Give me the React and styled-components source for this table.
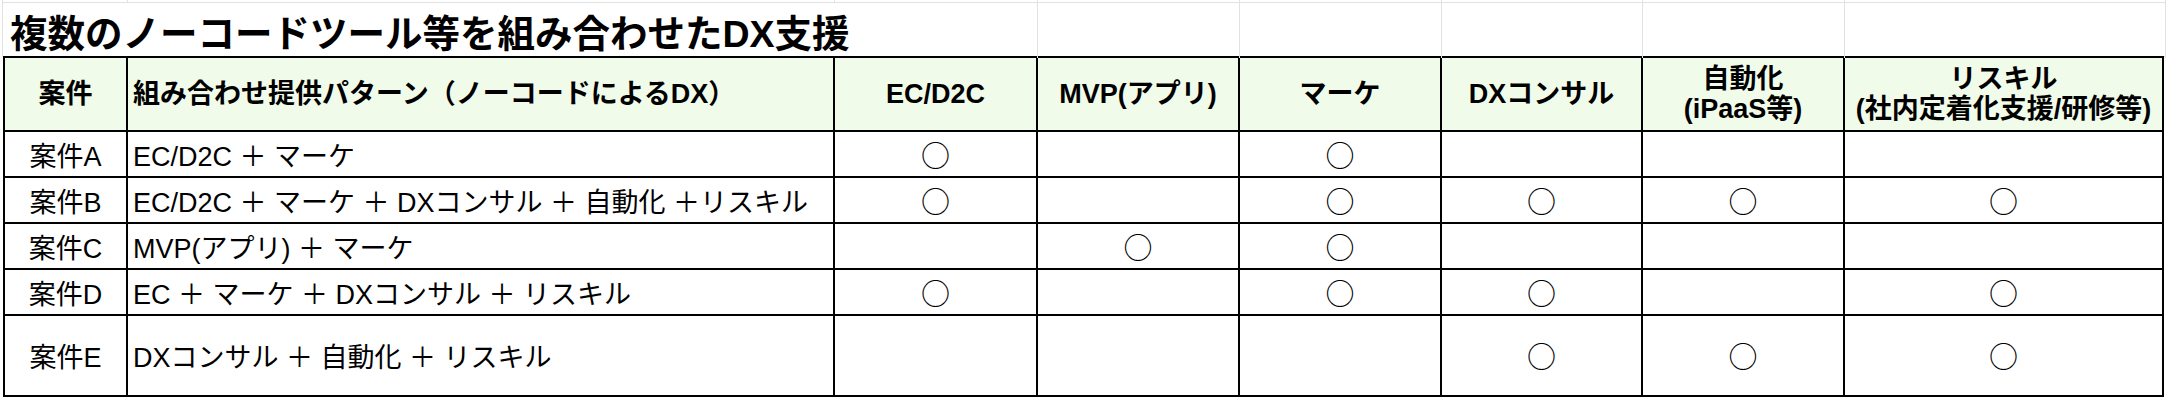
import React from 'react';
import styled, { createGlobalStyle } from 'styled-components';

const GlobalStyle = createGlobalStyle`
  body {
    margin: 0;
    background: #fff;
    color: #000;
    font-family: "Liberation Sans", "Noto Sans CJK JP", sans-serif;
  }
`;

const SHEET_COLS = '125px 707px 203px 202px 202px 201px 202px 321px';
const TABLE_COLS = '121px 705px 201px 200px 200px 199px 200px 317px';

const columns = ['EC/D2C', 'MVP(アプリ)', 'マーケ', 'DXコンサル', ['自動化', '(iPaaS等)'], ['リスキル', '(社内定着化支援/研修等)']];

const rows = [
    { name: '案件A', pattern: 'EC/D2C ＋ マーケ', marks: [1, 0, 1, 0, 0, 0] },
    { name: '案件B', pattern: 'EC/D2C ＋ マーケ ＋ DXコンサル ＋ 自動化 ＋リスキル', marks: [1, 0, 1, 1, 1, 1] },
    { name: '案件C', pattern: 'MVP(アプリ) ＋ マーケ', marks: [0, 1, 1, 0, 0, 0] },
    { name: '案件D', pattern: 'EC ＋ マーケ ＋ DXコンサル ＋ リスキル', marks: [1, 0, 1, 1, 0, 1] },
    { name: '案件E', pattern: 'DXコンサル ＋ 自動化 ＋ リスキル', marks: [0, 0, 0, 1, 1, 1] },
];

export default function App() {
    return (
        <>
            <GlobalStyle />
            <Sheet>
                <GridRow $height={2}>
                    {Array.from({ length: 8 }).map((_, i) => <GridCell key={i} />)}
                </GridRow>
                <GridRow $height={53}>
                    <TitleCell>複数のノーコードツール等を組み合わせたDX支援</TitleCell>
                    {Array.from({ length: 5 }).map((_, i) => <GridCell key={i} />)}
                </GridRow>
                <Table>
                    <HeadCell $align="center">案件</HeadCell>
                    <HeadCell>組み合わせ提供パターン（ノーコードによるDX）</HeadCell>
                    {columns.map((c, i) => (
                        <HeadCell key={i} $align="center">
                            {Array.isArray(c) ? c.map((line) => <Line key={line}>{line}</Line>) : c}
                        </HeadCell>
                    ))}
                    {rows.map((r) => (
                        <React.Fragment key={r.name}>
                            <Cell $align="center">{r.name}</Cell>
                            <Cell>{r.pattern}</Cell>
                            {r.marks.map((m, i) => (
                                <Cell key={i} $align="center">{m ? <Mark>○</Mark> : null}</Cell>
                            ))}
                        </React.Fragment>
                    ))}
                </Table>
            </Sheet>
        </>
    );
}

const Sheet = styled.div`
    width: 2166px;
    height: 400px;
    overflow: hidden;
`;

const GridRow = styled.div`
    display: grid;
    grid-template-columns: ${SHEET_COLS};
    height: ${(p) => p.$height}px;
    margin-left: 2px;
    border-left: 1px solid #e1e1e1;
    border-bottom: 1px solid #e1e1e1;
    box-sizing: content-box;
`;

const GridCell = styled.div`
    border-right: 1px solid #e1e1e1;
`;

const TitleCell = styled.div`
    grid-column: span 3;
    border-right: 1px solid #e1e1e1;
    display: flex;
    align-items: center;
    padding-left: 7px;
    font-size: 37.5px;
    font-weight: bold;
    white-space: nowrap;
`;

const Table = styled.div`
    display: grid;
    grid-template-columns: ${TABLE_COLS};
    grid-template-rows: 72px 44px 44px 44px 44px 79px;
    gap: 2px;
    padding: 2px;
    margin-left: 3px;
    margin-top: -1px;
    width: max-content;
    background: #000;
`;

const Cell = styled.div`
    background: #fff;
    display: flex;
    flex-direction: column;
    justify-content: center;
    align-items: ${(p) => (p.$align === 'center' ? 'center' : 'flex-start')};
    padding: 0 5px;
    font-size: 27px;
    white-space: nowrap;
    overflow: hidden;
`;

const HeadCell = styled(Cell)`
    background: #f1fbea;
    font-weight: bold;
    line-height: 30px;
`;

const Line = styled.span`
    display: block;
    text-align: center;
`;

const Mark = styled.span`
    font-family: "Noto Sans CJK JP", sans-serif;
    font-size: 29px;
    line-height: 1;
`;
